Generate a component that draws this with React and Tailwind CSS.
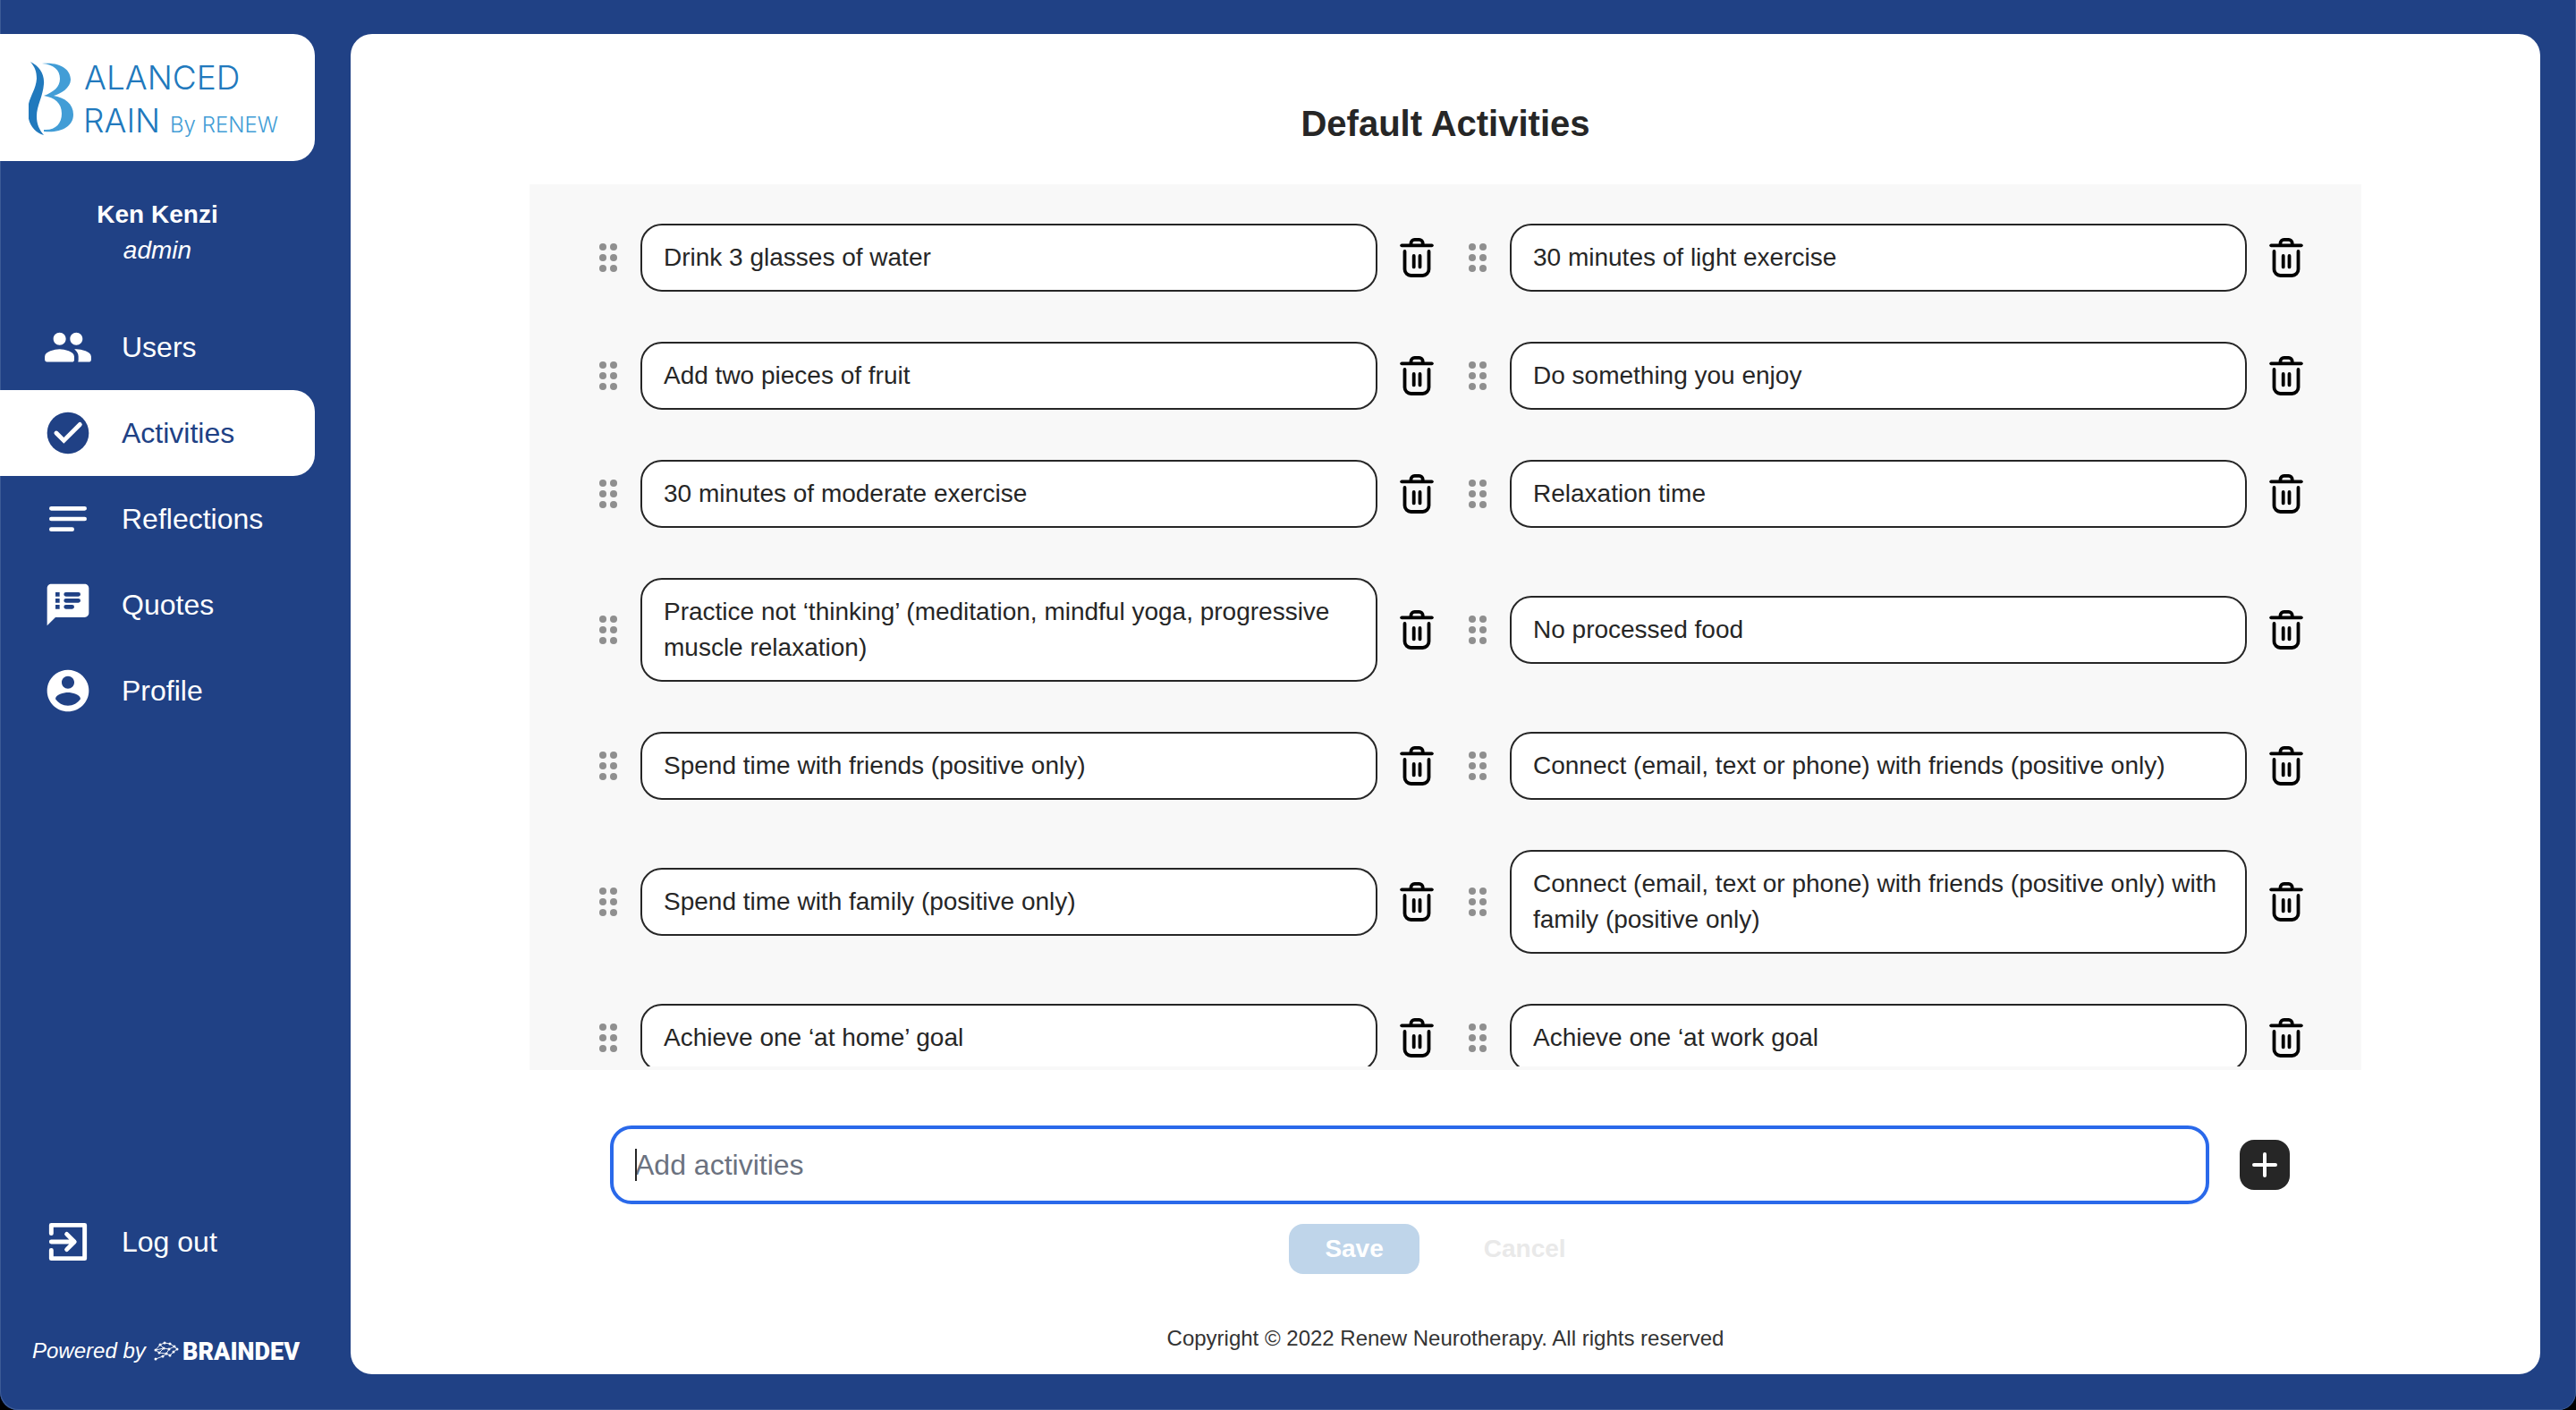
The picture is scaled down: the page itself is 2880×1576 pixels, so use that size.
import React from "react";

const activities = [
  "Drink 3 glasses of water",
  "30 minutes of light exercise",
  "Add two pieces of fruit",
  "Do something you enjoy",
  "30 minutes of moderate exercise",
  "Relaxation time",
  "Practice not ‘thinking’ (meditation, mindful yoga, progressive muscle relaxation)",
  "No processed food",
  "Spend time with friends (positive only)",
  "Connect (email, text or phone) with friends (positive only)",
  "Spend time with family (positive only)",
  "Connect (email, text or phone) with friends (positive only) with family (positive only)",
  "Achieve one ‘at home’ goal",
  "Achieve one ‘at work goal",
];

function Icon({ children }) {
  return (
    <svg viewBox="0 0 24 24" className="size-14 shrink-0" fill="currentColor" aria-hidden="true">
      {children}
    </svg>
  );
}

const UsersIcon = () => (
  <Icon>
    <path d="M16 11c1.66 0 2.99-1.34 2.99-3S17.66 5 16 5s-3 1.34-3 3 1.34 3 3 3zm-8 0c1.66 0 2.99-1.34 2.99-3S9.66 5 8 5 5 6.34 5 8s1.34 3 3 3zm0 2c-2.33 0-7.1 1.17-7.1 3.5V18c0 .55.45 1.1 1 1.1h12.1c.55 0 1-.45 1-1v-1.6c0-2.33-4.67-3.5-7-3.5zm8 0c-.29 0-.62.02-.97.05.02.01.03.03.04.04 1.14.83 1.93 1.94 1.93 3.41V18c0 .35-.07.69-.18 1.1H22c.55 0 1.1-.45 1.1-1v-1.6c0-2.33-4.77-3.5-7.1-3.5z" />
  </Icon>
);

const CheckIcon = () => (
  <Icon>
    <circle cx="12" cy="12" r="10" />
    <path d="M6.4 12 10 15.6 17.7 7.9" fill="none" stroke="#fff" strokeWidth="2.1" strokeLinecap="round" />
  </Icon>
);

const NotesIcon = () => (
  <Icon>
    <path d="M4 7h16M4 12h16M4 17h10" fill="none" stroke="currentColor" strokeWidth="2" strokeLinecap="round" />
  </Icon>
);

const QuotesIcon = () => (
  <Icon>
    <path
      fillRule="evenodd"
      d="M20 2H4c-1.1 0-1.99.9-1.99 2L2 22l4-4h14c1.1 0 2-.9 2-2V4c0-1.1-.9-2-2-2zM6 6h2v2H6zM6 9h2v2H6zM6 12h2v2H6zM11 6h6a1 1 0 0 1 0 2h-6a1 1 0 0 1 0-2zM11 9h6a1 1 0 0 1 0 2h-6a1 1 0 0 1 0-2zM11 12h3a1 1 0 0 1 0 2h-3a1 1 0 0 1 0-2z"
    />
  </Icon>
);

const ProfileIcon = () => (
  <Icon>
    <path d="M12 2C6.48 2 2 6.48 2 12s4.48 10 10 10 10-4.48 10-10S17.52 2 12 2zm0 3c1.66 0 3 1.34 3 3s-1.34 3-3 3-3-1.34-3-3 1.34-3 3-3zm0 14.2c-2.5 0-4.71-1.28-6-3.22.03-1.99 4-3.08 6-3.08 1.99 0 5.97 1.09 6 3.08-1.29 1.94-3.5 3.22-6 3.22z" />
  </Icon>
);

const LogoutIcon = () => (
  <Icon>
    <g fill="none" stroke="currentColor" strokeWidth="2.1" strokeLinecap="round" strokeLinejoin="round">
      <path d="M4 8V4h16v16H4v-4" />
      <path d="M4 12h11M11.4 8.3 15.1 12l-3.7 3.7" />
    </g>
  </Icon>
);

const TrashIcon = () => (
  <svg viewBox="0 0 48 48" className="size-12" fill="none" stroke="currentColor" strokeWidth="3.8" strokeLinecap="round" strokeLinejoin="round" aria-hidden="true">
    <path d="M7.2 10.3h33.6" />
    <path d="M17.5 10V7.8a4 4 0 0 1 4-4h5.2a4 4 0 0 1 4 4V10" />
    <path d="M10.5 17v20a7 7 0 0 0 7 7h13a7 7 0 0 0 7-7V17" />
    <path d="M20.7 22v12.4M27.5 22v12.4" />
  </svg>
);

const DragIcon = () => (
  <svg viewBox="0 0 48 48" className="size-12" fill="currentColor" aria-hidden="true">
    {[12, 24, 36].map((y) => (
      <React.Fragment key={y}>
        <circle cx="18" cy={y} r="4" />
        <circle cx="30" cy={y} r="4" />
      </React.Fragment>
    ))}
  </svg>
);

const Logo = () => (
  <svg viewBox="0 0 288 100" className="h-[100px] w-[288px]" role="img" aria-label="Balanced Brain By Renew">
    <path fill="#2179bd" d="M2 10C12 15 18 24 17 35C16 49 9 59 9 71C9 80 12 86 17 92C6 89-1 79-1 65C-1 51 8 43 9 29C9 21 7 16 2 10Z" />
    <path fill="#429dd6" d="M15 12C36 10 47 19 47 30C47 39 36 46 28 48C40 50 50 57 50 69C50 83 35 90 17 88V86C30 87 37 79 37 68C37 56 29 50 17 48C28 44 35 38 35 29C35 19 28 13 15 12Z" />
    <g fontFamily="Inter, sans-serif" fontWeight="300" fill="#2179bd">
      <text x="62" y="41" fontSize="37">ALANCED</text>
      <text x="61" y="89" fontSize="37">RAIN</text>
      <text x="158" y="89" fontSize="24" fill="#429dd6">By RENEW</text>
    </g>
  </svg>
);

const brainNodes = [
  [3, 20], [3, 10], [8, 4], [7, 13], [12, 8], [15, 14], [13, 2], [19, 3], [18, 9], [24, 6], [23, 12], [27, 9], [19, 16], [11, 17],
];

const BrainDev = () => (
  <svg viewBox="0 0 172 32" className="h-8 w-[172px]" role="img" aria-label="BrainDev">
    <g transform="translate(0 5)">
      <path
        d="M3 20 11 17 15 14 19 16 23 12 27 9 24 6 19 3 13 2 8 4 3 10 7 13 12 8 18 9 24 6M8 4l4 4M3 10l9-2M18 9l-3 5M7 13l8 1"
        fill="none"
        stroke="#fff"
        strokeWidth="0.9"
      />
      {brainNodes.map(([x, y]) => (
        <circle key={`${x}-${y}`} cx={x} cy={y} r="1.5" fill="#fff" />
      ))}
    </g>
    <text x="33" y="26" fontFamily="Roboto, sans-serif" fontWeight="900" fontStyle="normal" fontSize="27" fill="#fff">
      BRAINDEV
    </text>
  </svg>
);

const navItems = [
  { label: "Users", icon: UsersIcon },
  { label: "Activities", icon: CheckIcon, active: true },
  { label: "Reflections", icon: NotesIcon },
  { label: "Quotes", icon: QuotesIcon },
  { label: "Profile", icon: ProfileIcon },
];

function Sidebar() {
  return (
    <aside className="flex w-88 shrink-0 flex-col pb-[50px] text-white">
      <a href="#home" className="flex h-[142px] items-center rounded-r-3xl bg-white pl-8">
        <Logo />
      </a>
      <div className="my-10 text-center text-[28px] leading-10">
        <p className="font-bold">Ken Kenzi</p>
        <p className="italic">admin</p>
      </div>
      <nav className="flex flex-col">
        {navItems.map(({ label, icon: NavIcon, active }) => (
          <a
            key={label}
            href={`#${label.toLowerCase()}`}
            aria-current={active ? "page" : undefined}
            className={`flex h-24 items-center gap-8 pl-12 text-[32px] leading-12 ${active ? "rounded-r-3xl bg-white text-[#204185]" : ""}`}
          >
            <NavIcon />
            {label}
          </a>
        ))}
      </nav>
      <button type="button" className="mt-auto flex h-24 items-center gap-8 pl-12 text-[32px] leading-12">
        <LogoutIcon />
        Log out
      </button>
      <p className="mt-[58px] flex items-center gap-2 pl-9 text-2xl leading-8 whitespace-nowrap italic">
        Powered by
        <BrainDev />
      </p>
    </aside>
  );
}

function Activity({ text }) {
  return (
    <li className="flex items-center">
      <button type="button" aria-label={`Move ${text}`} className="shrink-0 cursor-grab text-[#8f8f8f]">
        <DragIcon />
      </button>
      <p className="ml-3 flex-1 rounded-3xl border-2 border-[#262626] bg-white px-6 py-4 text-[28px] leading-10">{text}</p>
      <button type="button" aria-label={`Delete ${text}`} className="ml-5 shrink-0 text-black">
        <TrashIcon />
      </button>
    </li>
  );
}

export default function App() {
  return (
    <div className="h-screen bg-black font-['Liberation_Sans',Arial,sans-serif]">
      <div className="flex h-full gap-10 rounded-b-[20px] bg-[#204185] pt-[38px] pr-10 shadow-[inset_1px_-1px_0_#3b5a96,inset_-1px_0_0_#3b5a96]">
        <Sidebar />
        <main className="mb-10 flex min-w-0 flex-1 flex-col rounded-3xl bg-white pt-18 pb-6 text-[#262626]">
          <h1 className="text-center text-[40px] leading-14 font-bold">Default Activities</h1>

          <section className="mx-50 mt-10 flex min-h-0 flex-1 flex-col bg-[#f8f8f8] pb-1">
            <ul className="grid min-h-0 flex-1 grid-cols-2 content-start gap-x-5 gap-y-14 overflow-y-auto pt-11 pr-15 pb-11 pl-16 [scrollbar-width:none]">
              {activities.map((text) => (
                <Activity key={text} text={text} />
              ))}
            </ul>
          </section>

          <form className="flex flex-col" onSubmit={(e) => e.preventDefault()}>
            <div className="mt-[62px] flex items-center gap-[34px] pr-70 pl-[290px]">
              <div className="relative flex-1">
                <input
                  type="text"
                  aria-label="Add activities"
                  placeholder="Add activities"
                  className="h-22 w-full rounded-3xl border-4 border-[#2a69ea] px-6 text-[32px] leading-12 caret-transparent outline-none placeholder:text-[#6b7280]"
                />
                <span className="pointer-events-none absolute inset-y-[26px] left-7 w-0.5 bg-[#262626]" />
              </div>
              <button type="button" aria-label="Add" className="flex size-14 items-center justify-center rounded-2xl bg-[#262626] text-white">
                <svg viewBox="0 0 28 28" className="size-7" stroke="currentColor" strokeWidth="4" strokeLinecap="round" aria-hidden="true">
                  <path d="M14 2v24M2 14h24" />
                </svg>
              </button>
            </div>
            <div className="mt-[22px] flex justify-center gap-8 text-[28px] leading-10 font-bold">
              <button type="submit" disabled className="h-14 rounded-2xl bg-[#bfd5ea] px-10 text-white">
                Save
              </button>
              <button type="button" disabled className="h-14 px-10 text-[#e9e9e9]">
                Cancel
              </button>
            </div>
          </form>

          <footer className="mt-14 text-center text-2xl leading-8 text-[#333333]">
            Copyright © 2022 Renew Neurotherapy. All rights reserved
          </footer>
        </main>
      </div>
    </div>
  );
}
